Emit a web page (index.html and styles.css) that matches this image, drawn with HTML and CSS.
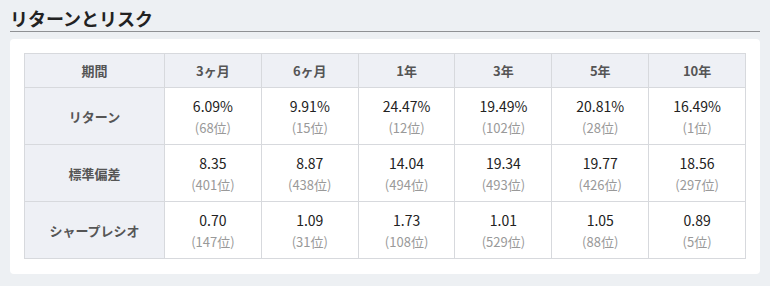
FILE: index.html
```html
<!DOCTYPE html>
<html lang="ja">
<head>
<meta charset="utf-8">
<link rel="stylesheet" href="styles.css">
</head>
<body>
<div class="page">
  <h2 class="title">リターンとリスク</h2>
  <div class="card">
    <table class="rr">
      <colgroup><col class="c-label"><col><col><col><col><col><col></colgroup>
      <thead>
        <tr><th>期間</th><th>3ヶ月</th><th>6ヶ月</th><th>1年</th><th>3年</th><th>5年</th><th>10年</th></tr>
      </thead>
      <tbody>
        <tr>
          <th>リターン</th>
          <td><span class="v">6.09%</span><span class="r">(68位)</span></td>
          <td><span class="v">9.91%</span><span class="r">(15位)</span></td>
          <td><span class="v">24.47%</span><span class="r">(12位)</span></td>
          <td><span class="v">19.49%</span><span class="r">(102位)</span></td>
          <td><span class="v">20.81%</span><span class="r">(28位)</span></td>
          <td><span class="v">16.49%</span><span class="r">(1位)</span></td>
        </tr>
        <tr>
          <th>標準偏差</th>
          <td><span class="v">8.35</span><span class="r">(401位)</span></td>
          <td><span class="v">8.87</span><span class="r">(438位)</span></td>
          <td><span class="v">14.04</span><span class="r">(494位)</span></td>
          <td><span class="v">19.34</span><span class="r">(493位)</span></td>
          <td><span class="v">19.77</span><span class="r">(426位)</span></td>
          <td><span class="v">18.56</span><span class="r">(297位)</span></td>
        </tr>
        <tr>
          <th>シャープレシオ</th>
          <td><span class="v">0.70</span><span class="r">(147位)</span></td>
          <td><span class="v">1.09</span><span class="r">(31位)</span></td>
          <td><span class="v">1.73</span><span class="r">(108位)</span></td>
          <td><span class="v">1.01</span><span class="r">(529位)</span></td>
          <td><span class="v">1.05</span><span class="r">(88位)</span></td>
          <td><span class="v">0.89</span><span class="r">(5位)</span></td>
        </tr>
      </tbody>
    </table>
  </div>
</div>
</body>
</html>
```
FILE: styles.css
```css
html, body {
  margin: 0;
  padding: 0;
  background: #edf0f3;
}
body {
  font-family: "Noto Sans CJK JP", "Noto Sans", sans-serif;
  color: #222;
}
.page {
  padding: 0 10px;
}
.title {
  margin: 0;
  padding-top: 5px;
  font-size: 18px;
  line-height: 26px;
  font-weight: bold;
  color: #222;
  border-bottom: 1px solid #8f9194;
}
.card {
  margin-top: 7px;
  background: #fff;
  border-radius: 4px;
  padding: 14px 14px 15px;
}
.rr {
  width: 722px;
  table-layout: fixed;
  border-collapse: collapse;
}
.c-label {
  width: 140px;
}
.rr th, .rr td {
  border: 1px solid #d7d9dd;
  text-align: center;
  padding: 0;
  vertical-align: middle;
}
.rr thead tr {
  height: 34px;
}
.rr tbody tr {
  height: 57px;
}
.rr th {
  background: #eef0f5;
  color: #555;
  font-size: 13px;
  font-weight: bold;
}
.rr td {
  padding-top: 2px;
}
.rr td .v {
  display: block;
  font-size: 14px;
  line-height: 20px;
  color: #222;
}
.rr td .r {
  display: block;
  margin-top: 2px;
  font-size: 13px;
  line-height: 20px;
  color: #999;
}
```
